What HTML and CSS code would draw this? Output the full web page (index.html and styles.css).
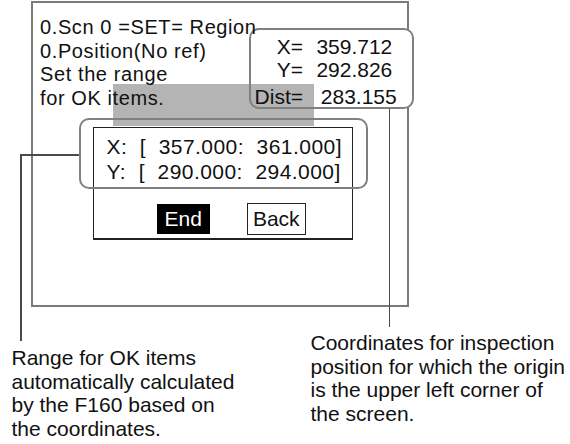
FILE: index.html
```html
<!DOCTYPE html>
<html lang="en">

<head>
  <meta charset="UTF-8">
  <meta name="viewport" content="width=device-width, initial-scale=1.0">
  <title>Region setting</title>
  <link rel="stylesheet" href="styles.css">
</head>

<body>
  <div class="figure">
    <!-- highlighted strip on the monitor -->
    <div class="shade"></div>

    <div class="screen">
      <div class="msg">
        <p>0.Scn 0 =SET= Region</p>
        <p>0.Position(No ref)</p>
        <p>Set the range</p>
        <p>for OK items.</p>
      </div>
      <div class="dialog">
        <div class="range">
          <p>X:  [  357.000:  361.000]</p>
          <p>Y:  [  290.000:  294.000]</p>
        </div>
        <div class="actions">
          <span class="btn btn-on">End</span>
          <span class="btn">Back</span>
        </div>
      </div>
    </div>

    <!-- callout boxes and leader lines -->
    <div class="readout">
      <span class="lbl">X=</span><span class="val">359.712</span>
      <span class="lbl">Y=</span><span class="val">292.826</span>
      <span class="lbl dist">Dist=</span><span class="val dist dist-val">283.155</span>
    </div>
    <div class="bracket"></div>
    <div class="lead lead-down"></div>
    <div class="lead lead-across"></div>
    <div class="lead lead-right"></div>

    <div class="notes">
      <p class="note note-left">Range for OK items<br>automatically calculated<br>by the F160 based on<br>the coordinates.</p>
      <p class="note note-right">Coordinates for inspection<br>position for which the origin<br>is the upper left corner of<br>the screen.</p>
    </div>
  </div>
</body>

</html>
```

FILE: styles.css
```css
body {
  margin: 0;
  background: #fff;
  color: #111;
  font-family: "Liberation Sans", Arial, sans-serif;
}

p {
  margin: 0;
}

.figure {
  position: relative;
  width: 570px;
  height: 444px;
  overflow: hidden;
}

/* monitor */
.screen {
  box-sizing: border-box;
  width: 378px;
  height: 306px;
  margin: 1px 0 0 31px;
  padding: 13px 0 0 7px;
  border: 2px solid #7a7a7a;
}

.msg {
  position: relative;
  z-index: 1;
  font-size: 20px;
  letter-spacing: 0.6px;
  line-height: 23.5px;
  white-space: nowrap;
}

.shade {
  position: absolute;
  left: 113px;
  top: 84px;
  width: 201px;
  height: 42px;
  background: #b4b4b4;
}

.dialog {
  box-sizing: border-box;
  width: 260px;
  height: 113px;
  margin: 17px 0 0 53px;
  border: 1px solid #222;
  border-bottom-width: 2px;
  font-size: 21px;
}

.range {
  padding: 6px 0 0 12.5px;
  line-height: 25px;
  letter-spacing: 0.45px;
}

.range p {
  white-space: pre;
}

.actions {
  display: flex;
  align-items: center;
  gap: 37px;
  margin: 19px 0 0 62.5px;
}

.btn {
  box-sizing: border-box;
  height: 31.5px;
  padding: 0 5px;
  border: 1px solid #222;
  line-height: 29.5px;
}

.btn-on {
  height: 30px;
  padding: 0 8px;
  border: 0;
  background: #000;
  color: #fff;
  line-height: 30px;
}

/* measured values callout */
.readout {
  position: absolute;
  left: 249px;
  top: 28px;
  box-sizing: border-box;
  width: 165px;
  height: 81px;
  padding-top: 4.6px;
  display: grid;
  grid-template-columns: 52px auto;
  column-gap: 13.4px;
  align-content: start;
  border: 2px solid #808080;
  border-radius: 10px;
  background: linear-gradient(#b4b4b4, #b4b4b4) left bottom / 63px 23px no-repeat, #fff;
  font-size: 21px;
  line-height: 23.5px;
}

.lbl {
  text-align: right;
}

.dist {
  margin-top: 3.2px;
}

.dist-val {
  margin-left: 4.4px;
}

.bracket {
  position: absolute;
  left: 79px;
  top: 118px;
  box-sizing: border-box;
  width: 289px;
  height: 71px;
  border: 2px solid #808080;
  border-radius: 10px;
}

.lead {
  position: absolute;
  background: #4a4a4a;
}

.lead-down {
  left: 20px;
  top: 154px;
  width: 2px;
  height: 187px;
}

.lead-across {
  left: 20px;
  top: 154px;
  width: 59px;
  height: 2px;
}

.lead-right {
  left: 388.5px;
  top: 109px;
  width: 1.6px;
  height: 218px;
}

/* captions */
.notes {
  display: flex;
  align-items: flex-start;
  font-size: 21px;
  line-height: 23.5px;
  white-space: nowrap;
}

.note-left {
  width: 299px;
  margin: 39.3px 0 0 11.5px;
}

.note-right {
  margin-top: 24.3px;
}
```
